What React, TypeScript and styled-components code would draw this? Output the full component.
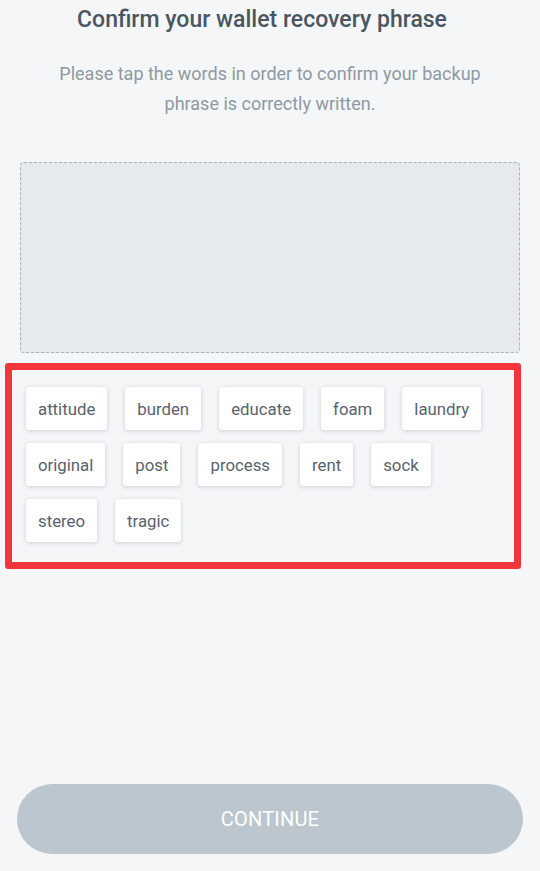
import styled, { createGlobalStyle } from "styled-components";

const GlobalStyle = createGlobalStyle`
  html, body {
    margin: 0;
    padding: 0;
    background: #f4f6f8;
    font-family: Roboto, "Liberation Sans", sans-serif;
  }
`;

const Page = styled.div`
  width: 540px;
  min-height: 871px;
  display: flex;
  flex-direction: column;
  box-sizing: border-box;
  background: #f4f6f8;
`;

const Title = styled.h1`
  margin: 0;
  padding-right: 16px;
  font-size: 23px;
  line-height: 40px;
  font-weight: 500;
  color: #4b5661;
  text-align: center;
`;

const Subtitle = styled.p`
  margin: 19px auto 0;
  width: 470px;
  font-size: 18px;
  line-height: 30px;
  color: #8f99a3;
  text-align: center;
`;

const Content = styled.div`
  padding: 0 20px;
  margin-top: 43px;
  display: flex;
  flex-direction: column;
`;

const DropZone = styled.div`
  height: 191px;
  box-sizing: border-box;
  background: #e6e9ed;
  border: 1px dashed #a7b1bb;
  border-radius: 4px;
`;

const Highlight = styled.div`
  margin: 10px 0 0 -15px;
  width: 516px;
  box-sizing: border-box;
  border: 7px solid #f2353b;
  border-radius: 3px;
  padding: 17px 14px 20px;
  display: flex;
  flex-wrap: wrap;
  gap: 13px 18px;
`;

const Chip = styled.button`
  height: 43px;
  padding: 0 12px;
  border: none;
  border-radius: 3px;
  background: #ffffff;
  box-shadow: 0 1px 4px rgba(60, 70, 80, 0.22);
  font-family: Roboto, "Liberation Sans", sans-serif;
  font-size: 16.8px;
  color: #59636d;
  cursor: pointer;
`;

const ContinueButton = styled.button`
  margin: auto 17px 17px;
  height: 70px;
  border: none;
  border-radius: 35px;
  background: #bcc6ce;
  color: #ffffff;
  font-family: Roboto, "Liberation Sans", sans-serif;
  font-size: 20px;
  letter-spacing: 0.2px;
`;

const WORDS = [
  "attitude", "burden", "educate", "foam", "laundry",
  "original", "post", "process", "rent", "sock",
  "stereo", "tragic",
];

export default function App() {
  return (
    <>
      <GlobalStyle />
      <Page>
        <Title>Confirm your wallet recovery phrase</Title>
        <Subtitle>
          Please tap the words in order to confirm your backup phrase is correctly written.
        </Subtitle>
        <Content>
          <DropZone />
          <Highlight>
            {WORDS.map((w) => (
              <Chip key={w}>{w}</Chip>
            ))}
          </Highlight>
        </Content>
        <ContinueButton disabled>CONTINUE</ContinueButton>
      </Page>
    </>
  );
}
